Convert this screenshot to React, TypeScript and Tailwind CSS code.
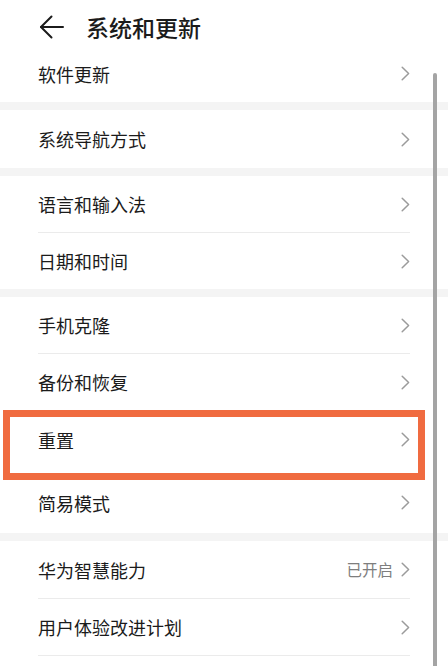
import React from "react";

const Chevron = () => (
  <svg width="9" height="15" viewBox="0 0 9 15" fill="none" className="shrink-0">
    <polyline points="1.2,1.2 7.6,7.5 1.2,13.8" stroke="#9b9b9b" strokeWidth="1.5" strokeLinecap="round" strokeLinejoin="round" />
  </svg>
);

const Row = ({ label, value, h = "h-[56px]", extra = "" }: { label: string; value?: string; h?: string; extra?: string }) => (
  <div className={`flex items-center justify-between pl-[38px] pr-[38px] ${h} ${extra}`}>
    <span className="text-[18px] text-[#1b1b1b] leading-none">{label}</span>
    <div className="flex items-center gap-[8px]">
      {value && <span className="text-[15.5px] text-[#7e7e7e] leading-none">{value}</span>}
      <Chevron />
    </div>
  </div>
);

const Divider = () => <div className="mx-[38px] h-px bg-[#ebebeb]" />;
const Band = () => <div className="h-[8px] bg-[#f4f4f4]" />;

export default function App() {
  return (
    <div
      className="relative w-[448px] h-[666px] overflow-hidden bg-white"
      style={{ fontFamily: '"Noto Sans CJK SC", "Noto Sans", sans-serif' }}
    >
      <div className="flex items-center h-[45px] pt-[9px] pl-[39px]">
        <svg width="26" height="24" viewBox="0 0 26 24" fill="none">
          <line x1="2" y1="12" x2="24" y2="12" stroke="#1b1b1b" strokeWidth="2" strokeLinecap="round" />
          <polyline points="12.5,1.5 2,12 12.5,22.5" stroke="#1b1b1b" strokeWidth="2" strokeLinecap="round" strokeLinejoin="round" />
        </svg>
        <span className="ml-[21px] text-[23px] font-medium text-[#1b1b1b] leading-none">系统和更新</span>
      </div>

      <Row label="软件更新" h="h-[57px]" />
      <Band />
      <Row label="系统导航方式" h="h-[58px]" />
      <Band />
      <Row label="语言和输入法" />
      <Divider />
      <Row label="日期和时间" />
      <Band />
      <Row label="手机克隆" />
      <Divider />
      <Row label="备份和恢复" />
      <Divider />
      <div className="relative">
        <Row label="重置" h="h-[57px]" />
        <div className="absolute left-[3px] top-[-1px] w-[422px] h-[70px] border-[7px] border-[#f06b40]" />
      </div>
      <Row label="简易模式" h="h-[65px]" extra="pt-[4px]" />
      <Band />
      <Row label="华为智慧能力" value="已开启" h="h-[57px]" />
      <Divider />
      <Row label="用户体验改进计划" />
      <Divider />
      <Row label="" />

      <div className="absolute left-[433px] top-[73px] w-[4px] h-[600px] rounded-t-full bg-[#a4a4a4]" />
    </div>
  );
}
